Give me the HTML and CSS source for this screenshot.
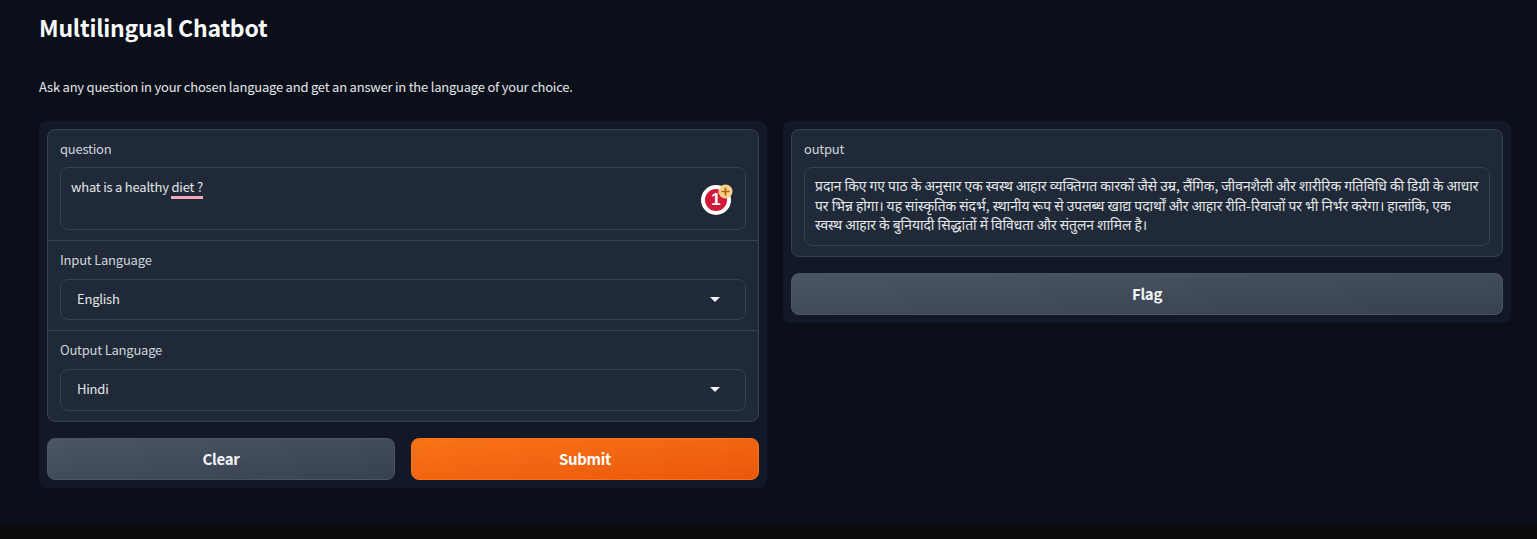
FILE: index.html
```html
<!DOCTYPE html>
<html lang="en">
<head>
  <meta charset="UTF-8">
  <title>Multilingual Chatbot</title>
  <link rel="stylesheet" href="styles.css">
</head>
<body>
  <main class="app">
    <h1 class="title">Multilingual Chatbot</h1>
    <p class="intro">Ask any question in your chosen language and get an answer in the language of your choice.</p>

    <div class="columns">
      <section class="panel">
        <div class="form">
          <div class="block block-first">
            <div class="label">question</div>
            <div class="box box-question">
              <span>what is a healthy <span class="misspelt">diet ?</span></span>
              <span class="badge">
                <span class="badge-count">1</span>
                <svg class="badge-plus" width="15" height="15" viewBox="0 0 15 15">
                  <circle cx="7.5" cy="7.5" r="7" fill="#fbd38d"/>
                  <path d="M7.5 3.5v8M3.5 7.5h8" stroke="#a8650f" stroke-width="1.7"/>
                </svg>
              </span>
            </div>
          </div>
          <div class="block">
            <div class="label">Input Language</div>
            <div class="box box-select">
              <span>English</span>
              <span class="caret"></span>
            </div>
          </div>
          <div class="block">
            <div class="label">Output Language</div>
            <div class="box box-select box-last">
              <span>Hindi</span>
              <span class="caret"></span>
            </div>
          </div>
        </div>
        <div class="actions">
          <button class="btn" type="button">Clear</button>
          <button class="btn btn-primary" type="button">Submit</button>
        </div>
      </section>

      <section class="panel">
        <div class="form">
          <div class="block block-first">
            <div class="label">output</div>
            <div class="box box-output">प्रदान किए गए पाठ के अनुसार एक स्वस्थ आहार व्यक्तिगत कारकों जैसे उम्र, लैंगिक, जीवनशैली और शारीरिक गतिविधि की डिग्री के आधार पर भिन्न होगा। यह सांस्कृतिक संदर्भ, स्थानीय रूप से उपलब्ध खाद्य पदार्थों और आहार रीति-रिवाजों पर भी निर्भर करेगा। हालांकि, एक स्वस्थ आहार के बुनियादी सिद्धांतों में विविधता और संतुलन शामिल है।</div>
          </div>
        </div>
        <div class="actions">
          <button class="btn" type="button">Flag</button>
        </div>
      </section>
    </div>
  </main>
  <div class="bottom-strip"></div>
</body>
</html>
```
FILE: styles.css
```css
* {box-sizing:border-box}
html,body {height:100%}
body {margin:0;background:#0b0f19;color:#f3f4f6;display:flex;flex-direction:column;
      font-family:"Noto Sans CJK SC","Source Sans Pro","Noto Sans",sans-serif;font-size:13px;line-height:21px;letter-spacing:-.22px}

.app {flex:1;padding:0 26px 0 39px}
.title {margin:0;padding-top:12px;font-size:23px;line-height:30px;font-weight:600;color:#f9fafb;letter-spacing:-.2px}
.intro {margin:34px 0 0;height:21px;color:#e5e7eb}

.columns {display:flex;gap:16px;align-items:flex-start;margin-top:24px}
.panel {flex:1;min-width:0;background:#111827;border-radius:8px;padding:8px;display:flex;flex-direction:column;gap:16px}

.form {background:#1f2937;border:1px solid #374151;border-radius:8px;overflow:hidden}
.block {padding:9px 12px 10px;border-top:1px solid #374151}
.block-first {border-top:0}
.label {color:#d1d5db;line-height:19px;margin-bottom:10px}
.block-first .label {margin-bottom:9px}

.box {background:#1f2937;border:1px solid #374151;border-radius:8px;color:#e5e7eb}
.box-question {height:63px;padding:8px 10px;position:relative}
.box-select {height:41px;padding:0 25px 2px 16px;display:flex;align-items:center;justify-content:space-between}
.box-last {height:42px;padding-bottom:3px}
.box-output {min-height:79px;padding:8px 10px;line-height:19.5px;font-size:13.85px;letter-spacing:0}

.misspelt {border-bottom:3px solid #f8a5b8;display:inline-block;line-height:19px}

.badge {position:absolute;left:640px;top:17px;width:30px;height:30px;border-radius:50%;background:#d11a3a;
        border:4px solid #fff;color:#fff;font:700 17px "Liberation Sans",sans-serif;letter-spacing:0;display:flex;align-items:center;justify-content:center}
.badge-count {line-height:22px}
.badge-plus {position:absolute;right:-5.5px;top:-5.5px}

.caret {width:0;height:0;border-left:5px solid transparent;border-right:5px solid transparent;border-top:5px solid #f3f4f6;margin-top:2px}

.actions {display:flex;gap:16px}
.btn {flex:1;height:42px;border:1px solid #4b5563;border-radius:8px;color:#f3f4f6;cursor:pointer;letter-spacing:-.3px;
      background:linear-gradient(to bottom right,#4b5563,#374151);
      font:600 15px/20px "Noto Sans CJK SC","Noto Sans",sans-serif}
.btn-primary {border-color:#f97316;color:#fff;background:linear-gradient(to bottom right,#f97316,#ea580c)}

.bottom-strip {height:14px;background:#0c0c0c}
```
